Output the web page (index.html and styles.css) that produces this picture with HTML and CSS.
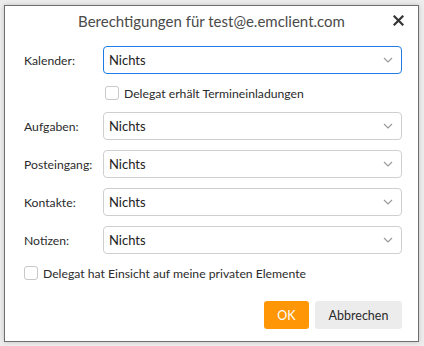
FILE: index.html
```html
<!DOCTYPE html>
<html lang="de">
<head>
<meta charset="utf-8">
<title>Berechtigungen</title>
<link rel="stylesheet" href="styles.css">
</head>
<body>
<div class="dialog">
  <div class="titlebar">
    <div class="title">Berechtigungen für test@e.emclient.com</div>
    <div class="close">
      <svg width="11" height="11" viewBox="0 0 11 11"><path d="M1.5 1.5 L9.5 9.5 M9.5 1.5 L1.5 9.5" stroke="#333" stroke-width="2.2" stroke-linecap="square"/></svg>
    </div>
  </div>
  <div class="body">
    <div class="row">
      <div class="label">Kalender:</div>
      <div class="select focused"><span>Nichts</span><svg class="chev" width="10" height="6" viewBox="0 0 10 6"><path d="M1 1 L5 5 L9 1" fill="none" stroke="#9a9a9a" stroke-width="1.2"/></svg></div>
    </div>
    <div class="check indent"><span class="box"></span><span>Delegat erhält Termineinladungen</span></div>
    <div class="row">
      <div class="label">Aufgaben:</div>
      <div class="select"><span>Nichts</span><svg class="chev" width="10" height="6" viewBox="0 0 10 6"><path d="M1 1 L5 5 L9 1" fill="none" stroke="#9a9a9a" stroke-width="1.2"/></svg></div>
    </div>
    <div class="row">
      <div class="label">Posteingang:</div>
      <div class="select"><span>Nichts</span><svg class="chev" width="10" height="6" viewBox="0 0 10 6"><path d="M1 1 L5 5 L9 1" fill="none" stroke="#9a9a9a" stroke-width="1.2"/></svg></div>
    </div>
    <div class="row">
      <div class="label">Kontakte:</div>
      <div class="select"><span>Nichts</span><svg class="chev" width="10" height="6" viewBox="0 0 10 6"><path d="M1 1 L5 5 L9 1" fill="none" stroke="#9a9a9a" stroke-width="1.2"/></svg></div>
    </div>
    <div class="row">
      <div class="label">Notizen:</div>
      <div class="select"><span>Nichts</span><svg class="chev" width="10" height="6" viewBox="0 0 10 6"><path d="M1 1 L5 5 L9 1" fill="none" stroke="#9a9a9a" stroke-width="1.2"/></svg></div>
    </div>
    <div class="check bottom"><span class="box"></span><span>Delegat hat Einsicht auf meine privaten Elemente</span></div>
    <div class="buttons">
      <div class="btn ok">OK</div>
      <div class="btn cancel">Abbrechen</div>
    </div>
  </div>
</div>
</body>
</html>
```
FILE: styles.css
```css
html, body {
  margin: 0;
  padding: 0;
}
body {
  background: #ececec;
  font-family: Lato, "Noto Sans", sans-serif;
  color: #2b2b2b;
  width: 424px;
  height: 346px;
  padding-top: 5px;
  padding-left: 4px;
  box-sizing: border-box;
}
.dialog {
  width: 415px;
  height: 337px;
  box-sizing: border-box;
  background: #fff;
  border: 1px solid #6f6f6f;
  box-shadow: 0 0 4px rgba(0,0,0,0.18);
  display: flex;
  flex-direction: column;
}
.titlebar {
  height: 29px;
  display: flex;
  align-items: center;
  justify-content: center;
  position: relative;
}
.title {
  font-size: 15px;
  color: #4a4a4a;
}
.close {
  position: absolute;
  right: 14px;
  top: 9px;
  width: 11px;
  height: 11px;
  display: flex;
}
.body {
  padding: 11px 16px 0 19px;
  display: flex;
  flex-direction: column;
}
.row {
  display: flex;
  align-items: center;
  height: 28px;
  margin-bottom: 10px;
}
.label {
  width: 79px;
  font-size: 12.2px;
  color: #2b2b2b;
}
.select {
  flex: 1;
  height: 28px;
  box-sizing: border-box;
  border: 1px solid #cfcfcf;
  border-radius: 4px;
  display: flex;
  align-items: center;
  justify-content: space-between;
  padding: 0 8px 0 5px;
  font-size: 13px;
  color: #222;
}
.select.focused {
  border-color: #1e7ce6;
}
.chev {
  display: block;
}
.check {
  display: flex;
  align-items: center;
  gap: 5px;
  font-size: 12.2px;
  color: #2b2b2b;
  height: 14px;
}
.check.indent {
  padding-left: 81px;
  margin-top: 2px;
  margin-bottom: 12px;
}
.check.bottom {
  margin-top: 2px;
  margin-bottom: 14px;
}
.box {
  width: 12px;
  height: 12px;
  border: 1px solid #c8c8c8;
  border-radius: 3px;
  display: inline-block;
  flex: none;
}
.buttons {
  display: flex;
  justify-content: flex-end;
  gap: 6px;
  margin-top: 7px;
}
.btn {
  height: 28px;
  display: flex;
  align-items: center;
  justify-content: center;
  border-radius: 3px;
  font-size: 12.5px;
}
.ok {
  width: 45px;
  background: #ff9606;
  color: #fff;
}
.cancel {
  width: 87px;
  background: #ececec;
  color: #2b2b2b;
}
```
